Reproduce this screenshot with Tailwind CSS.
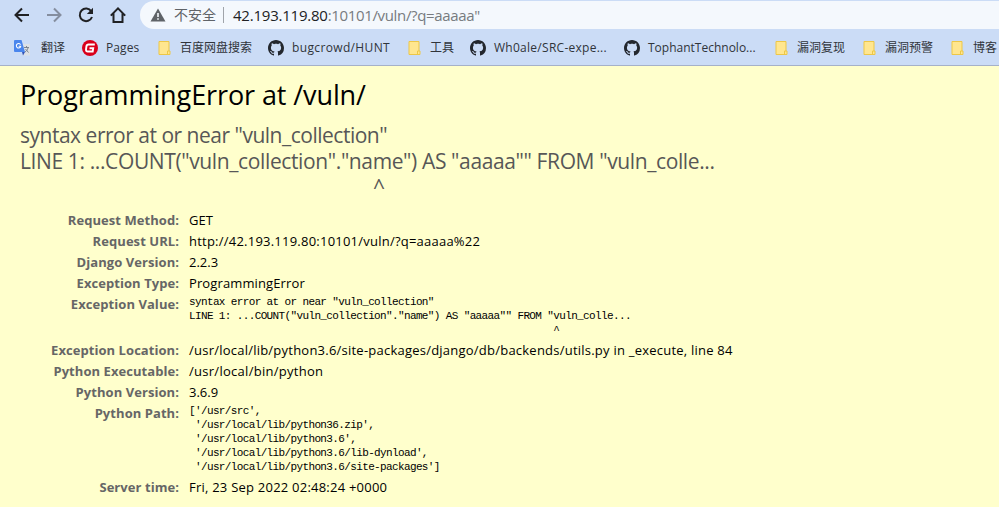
<!DOCTYPE html>
<html lang="zh-CN">
<head>
<meta charset="utf-8">
<title>ProgrammingError at /vuln/</title>
<script src="https://cdn.jsdelivr.net/npm/@tailwindcss/browser@4"></script>
</head>
<body class="w-[999px] h-[507px] overflow-hidden bg-[#ffffcc] font-['Open_Sans','Noto_Sans_CJK_SC',sans-serif] text-black">
<svg class="hidden">
  <symbol id="gh" viewBox="0 0 16 16"><path fill="#23272e" d="M8 0C3.58 0 0 3.58 0 8c0 3.54 2.29 6.53 5.47 7.59.4.07.55-.17.55-.38 0-.19-.01-.82-.01-1.49-2.01.37-2.53-.49-2.69-.94-.09-.23-.48-.94-.82-1.13-.28-.15-.68-.52-.01-.53.63-.01 1.08.58 1.23.82.72 1.21 1.87.87 2.33.66.07-.52.28-.87.51-1.07-1.78-.2-3.64-.89-3.64-3.95 0-.87.31-1.59.82-2.15-.08-.2-.36-1.02.08-2.12 0 0 .67-.21 2.2.82.64-.18 1.32-.27 2-.27s1.36.09 2 .27c1.53-1.04 2.2-.82 2.2-.82.44 1.1.16 1.92.08 2.12.51.56.82 1.27.82 2.15 0 3.07-1.87 3.75-3.65 3.95.29.25.54.73.54 1.48 0 1.07-.01 1.93-.01 2.2 0 .21.15.46.55.38A8.01 8.01 0 0 0 16 8c0-4.42-3.58-8-8-8z"/></symbol>
  <symbol id="folder" viewBox="0 0 13 14"><path d="M1 .5h10v9.500h1v3.500H1z" fill="#ffe68f" stroke="#edc747"/><path d="M9.500 13.500v-3.500h1.500" fill="none" stroke="#edc747"/></symbol>
</svg>
<header class="h-[66px] bg-[#cbdcf6] border-b border-[#a5b1c8]">
  <div class="flex h-[30px] pt-px items-start">
    <div class="flex w-[140px] h-[28px] shrink-0 items-center pl-[14px] gap-4">
      <svg class="size-4 shrink-0" viewBox="0 0 16 16" fill="none" stroke="#202124" stroke-width="2"><path d="M15 8H2M8 1.500 1.500 8 8 14.500"/></svg>
      <svg class="size-4 shrink-0" viewBox="0 0 16 16" fill="none" stroke="#858e9f" stroke-width="2"><path d="M1 8h13M8 1.500 14.500 8 8 14.500"/></svg>
      <svg class="size-4 shrink-0" viewBox="0 0 16 16"><path d="M13.300 4.300A6.300 6.300 0 1 0 14 10" fill="none" stroke="#202124" stroke-width="2"/><path d="M15 .8v6.200H8.800z" fill="#202124"/></svg>
      <svg class="size-4 shrink-0" viewBox="0 0 16 16" fill="none" stroke="#202124" stroke-width="2"><path d="M.8 8.600 8 1.400l7.200 7.200M3.500 6.500v8.500h9V6.500"/></svg>
    </div>
    <div class="flex h-[28px] flex-1 items-center rounded-l-full bg-[#f4f8fd] pl-[10px] text-[#5f6368]">
      <svg class="w-[16px] h-[14px] shrink-0" viewBox="0 0 16 14"><path d="M8 .5 15.500 13.500H.5z" fill="#5f6368"/><path d="M8 5v4M8 10.200v1.600" stroke="#f4f8fd" stroke-width="1.600"/></svg>
      <span class="ml-[8px] text-[14px] leading-7 whitespace-nowrap">不安全</span>
      <span class="ml-[7px] h-4 w-px bg-[#a0a4aa]"></span>
      <span class="ml-[9px] text-[15px] leading-7 whitespace-nowrap text-[#777b80] tracking-[-0.35px]"><span class="text-[#202124] tracking-[-0.22px]">42.193.119.80</span>:10101/vuln/?q=aaaaa"</span>
    </div>
  </div>
  <nav class="flex h-[35px] items-center text-[12px] text-[#30343a] whitespace-nowrap">
    <div class="flex w-[68px] shrink-0 pl-[14px] items-center"><svg class="size-4 mr-[11px] shrink-0" viewBox="0 0 16 16"><path d="M6 4h9a1 1 0 0 1 1 1v10.500H9z" fill="#dde1e6"/><path d="M1 0h6.500L11 12H1a1 1 0 0 1-1-1V1a1 1 0 0 1 1-1z" fill="#4a86ed"/><path d="m8 12h3l-2 3.500z" fill="#3154b8"/><path d="M10 7.500h5M12.500 6v1.500M14 8c-.5 2-1.500 3-3 4M11.500 9l3 3.500" fill="none" stroke="#727c88" stroke-width=".9"/><path d="M6.500 4.700A2.200 2.200 0 1 0 6.700 6.300H4.700" fill="none" stroke="#fff" stroke-width="1.100"/></svg><span>翻译</span></div>
    <div class="flex w-[90px] shrink-0 pl-[14px] items-center"><svg class="size-4 mr-[8px] shrink-0" viewBox="0 0 16 16"><circle cx="8" cy="8" r="8" fill="#d9001b"/><path d="M12.800 4.500H6.500Q4.700 4.500 4.400 6.500L4 9.500Q3.900 11.500 5.800 11.500H10.700L11.200 8.300H7.500" fill="none" stroke="#fff" stroke-width="1.900"/></svg><span class="tracking-[0.1px]">Pages</span></div>
    <div class="flex w-[110px] shrink-0 items-center"><svg class="w-[13px] h-[14px] mr-[9px] shrink-0"><use href="#folder"/></svg><span>百度网盘搜索</span></div>
    <div class="flex w-[140px] shrink-0 items-center"><svg class="size-4 mr-[8px] shrink-0"><use href="#gh"/></svg><span class="tracking-[0.36px]">bugcrowd/HUNT</span></div>
    <div class="flex w-[62px] shrink-0 items-center"><svg class="w-[13px] h-[14px] mr-[9px] shrink-0"><use href="#folder"/></svg><span>工具</span></div>
    <div class="flex w-[154px] shrink-0 items-center"><svg class="size-4 mr-[8px] shrink-0"><use href="#gh"/></svg><span class="tracking-[0.27px]">Wh0ale/SRC-expe...</span></div>
    <div class="flex w-[151px] shrink-0 items-center"><svg class="size-4 mr-[8px] shrink-0"><use href="#gh"/></svg><span>TophantTechnolo...</span></div>
    <div class="flex w-[88px] shrink-0 items-center"><svg class="w-[13px] h-[14px] mr-[9px] shrink-0"><use href="#folder"/></svg><span>漏洞复现</span></div>
    <div class="flex w-[88px] shrink-0 items-center"><svg class="w-[13px] h-[14px] mr-[9px] shrink-0"><use href="#folder"/></svg><span>漏洞预警</span></div>
    <div class="flex shrink-0 items-center"><svg class="w-[13px] h-[14px] mr-[9px] shrink-0"><use href="#folder"/></svg><span>博客</span></div>
  </nav>
</header>
<main class="px-5 pt-[11px]">
  <h1 class="text-[27px] leading-[36px] whitespace-nowrap tracking-[-0.1px]">ProgrammingError at /vuln/</h1>
  <pre class="mt-[9px] font-['Open_Sans',sans-serif] text-[21px] leading-[26px] text-[#575757]"><span class="tracking-[-0.49px]">syntax error at or near "vuln_collection"</span>
<span class="tracking-[-0.38px]">LINE 1: ...COUNT("vuln_collection"."name") AS "aaaaa"" FROM "vuln_colle...</span>
<span class="inline-block pl-[353px]">^</span></pre>
  <dl class="mt-[10px] grid grid-cols-[159px_1fr] gap-x-[10px] text-[13px] leading-[21px] whitespace-nowrap tracking-[0.23px] [&>dt]:text-right [&>dt]:font-bold [&>dt]:tracking-[0.06px] [&>dt]:text-[#666666]">
    <dt>Request Method:</dt><dd class="tracking-normal">GET</dd>
    <dt>Request URL:</dt><dd>http://42.193.119.80:10101/vuln/?q=aaaaa%22</dd>
    <dt>Django Version:</dt><dd class="tracking-normal">2.2.3</dd>
    <dt>Exception Type:</dt><dd class="tracking-[0.12px]">ProgrammingError</dd>
    <dt>Exception Value:</dt><dd class="h-[46px]"><pre class="pt-px font-['Liberation_Mono',monospace] text-[11px] leading-[14px] tracking-[-0.63px]">syntax error at or near "vuln_collection"
LINE 1: ...COUNT("vuln_collection"."name") AS "aaaaa"" FROM "vuln_colle...
                                                             ^</pre></dd>
    <dt>Exception Location:</dt><dd>/usr/local/lib/python3.6/site-packages/django/db/backends/utils.py in _execute, line 84</dd>
    <dt>Python Executable:</dt><dd class="tracking-[0.28px]">/usr/local/bin/python</dd>
    <dt>Python Version:</dt><dd class="tracking-normal">3.6.9</dd>
    <dt>Python Path:</dt><dd class="h-[74px]"><pre class="pt-px font-['Liberation_Mono',monospace] text-[11px] leading-[14px] tracking-[-0.63px]">['/usr/src',
 '/usr/local/lib/python36.zip',
 '/usr/local/lib/python3.6',
 '/usr/local/lib/python3.6/lib-dynload',
 '/usr/local/lib/python3.6/site-packages']</pre></dd>
    <dt>Server time:</dt><dd>Fri, 23 Sep 2022 02:48:24 +0000</dd>
  </dl>
</main>
</body>
</html>
